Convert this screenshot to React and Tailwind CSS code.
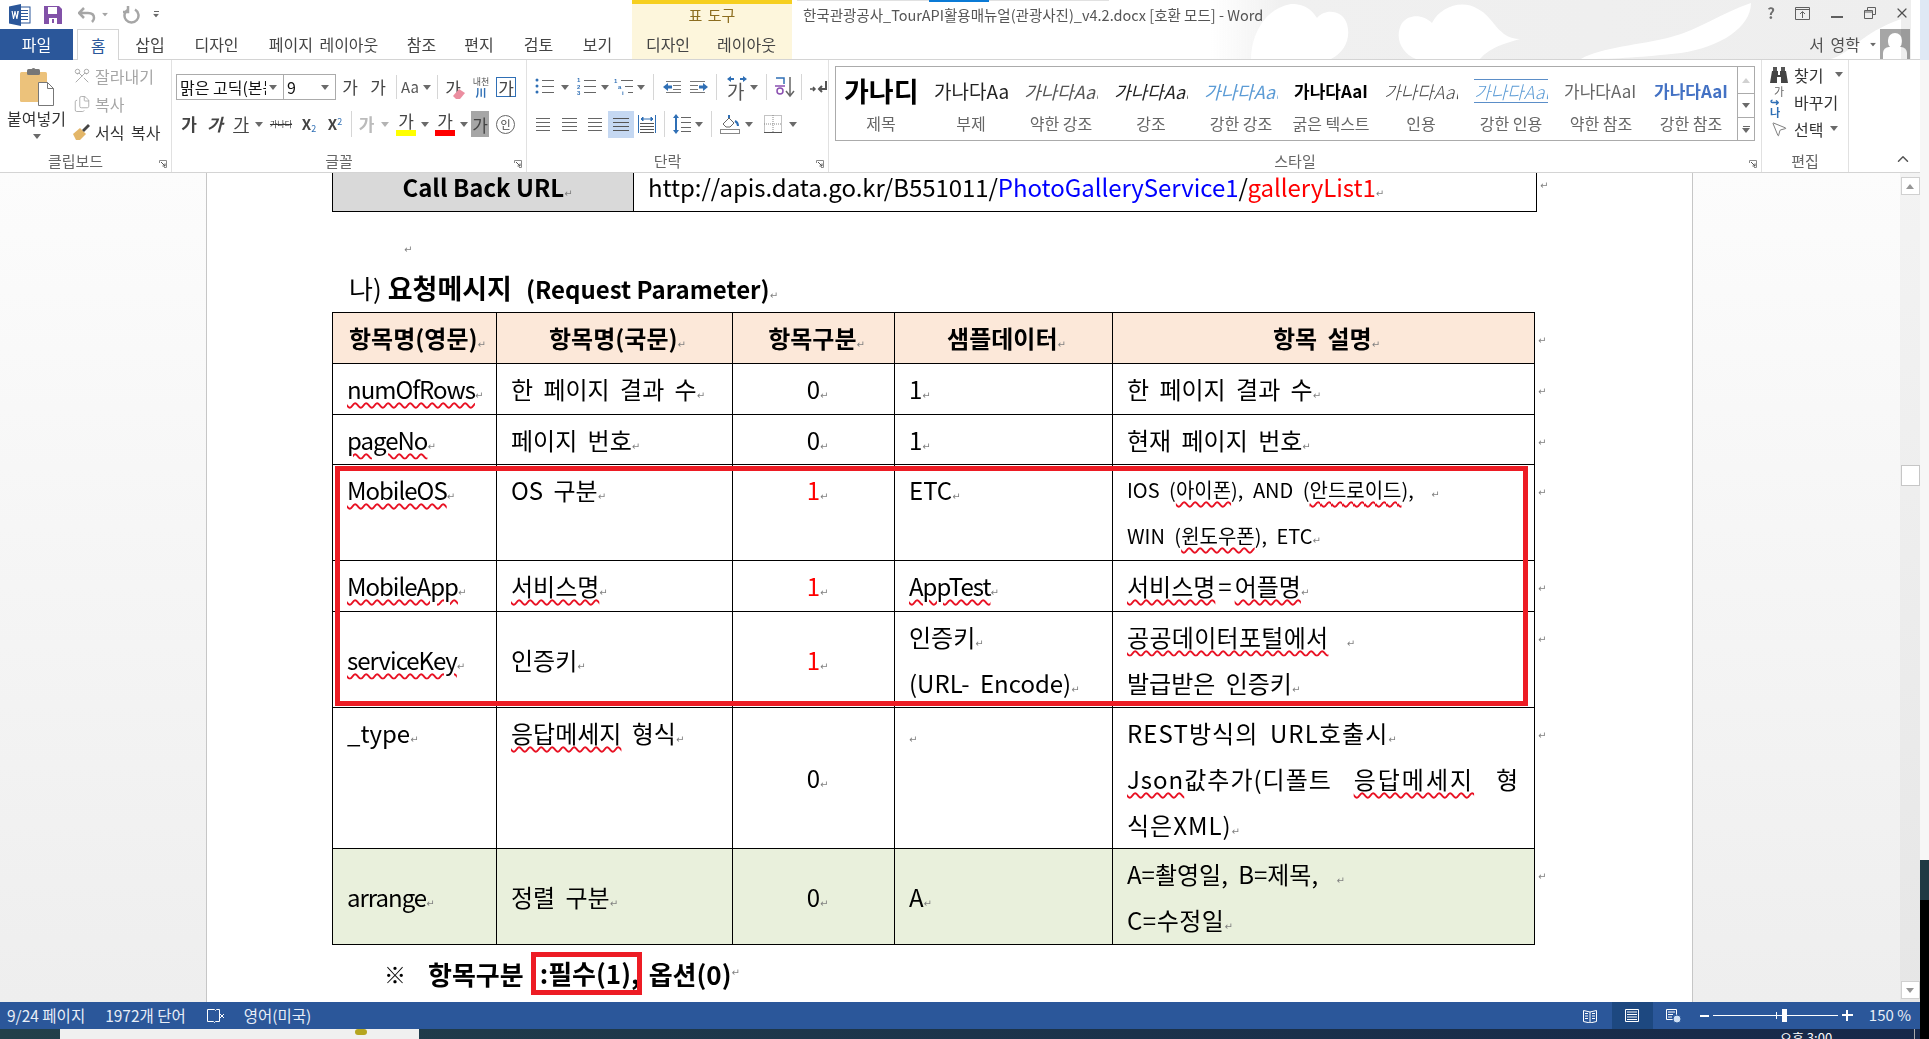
import { Scissors, Files, MousePointer2, ChevronUp, X } from "lucide-react";

const Caret = ({ className = "" }) => (
  <svg width="8" height="5" viewBox="0 0 8 5" className={`shrink-0 ${className}`}>
    <path d="M0 0h8L4 5z" fill="#6a6a6a" />
  </svg>
);

const Launcher = () => (
  <svg width="8" height="8" viewBox="0 0 8 8" className="absolute right-[4px] bottom-[4px]">
    <path d="M.5 3V.5H7.500V7.500H5" fill="none" stroke="#8a8a8a" />
    <path d="M2 2l4 4M6 3.500V6H3.500" fill="none" stroke="#555" />
  </svg>
);

const Sep = ({ className = "h-[26px]" }) => <div className={`w-px bg-[#d6d6d6] shrink-0 ${className}`} />;

const Mark = ({ className = "" }) => (
  <span className={`font-['DejaVu_Sans'] text-[10px] leading-none text-[#808080] font-normal tracking-normal no-underline ${className}`}>↵</span>
);

const Sp = ({ children, className = "" }) => (
  <span className={`underline decoration-wavy decoration-[#e81123] decoration-[1.5px] underline-offset-[3px] ${className}`}>{children}</span>
);

const Ga = ({ className = "" }) => <span className={`text-[17px] leading-none text-[#444] ${className}`}>가</span>;

function LinesIcon({ rows, x = 0, width = 18, color = "#666" }) {
  return (
    <svg width={width + x} height="18" viewBox={`0 0 ${width + x} 18`} className="shrink-0">
      {rows.map((y) => (
        <rect key={y} x={x} y={y} width={width} height="1" fill={color} />
      ))}
    </svg>
  );
}

function ListIcon({ kind }) {
  const blue = "#2f6fb5";
  return (
    <svg width="20" height="18" viewBox="0 0 20 18" className="shrink-0">
      {kind === "bullet" && [2, 8, 14].map((y) => <circle key={y} cx="2" cy={y} r="1.500" fill={blue} />)}
      {kind === "number" &&
        ["1", "2", "3"].map((n, i) => (
          <text key={n} x="0" y={4 + i * 6.500} fontSize="6" fill={blue} fontFamily="Liberation Sans" fontWeight="700">{n}</text>
        ))}
      {kind === "multi" && (
        <>
          <text x="0" y="5" fontSize="6" fill={blue} fontFamily="Liberation Sans" fontWeight="700">1</text>
          <text x="4" y="11" fontSize="6" fill={blue} fontFamily="Liberation Sans" fontWeight="700">a</text>
          <text x="8" y="17" fontSize="6" fill={blue} fontFamily="Liberation Sans" fontWeight="700">i</text>
        </>
      )}
      {kind === "multi" ? (
        <>
          <rect x="7" y="2" width="12" height="1" fill="#666" />
          <rect x="11" y="8" width="8" height="1" fill="#666" />
          <rect x="14" y="14" width="5" height="1" fill="#666" />
        </>
      ) : (
        [2, 8, 14].map((y) => <rect key={y} x="7" y={y} width="12" height="1" fill="#666" />)
      )}
    </svg>
  );
}

function IndentIcon({ flip }) {
  return (
    <svg width="18" height="14" viewBox="0 0 18 14" className={`shrink-0 ${flip ? "-scale-x-100" : ""}`}>
      <path d="M0 7l5-4v2.500h4v3H5V11z" fill="#2f6fb5" />
      {[1, 5, 9, 12].map((y) => (
        <rect key={y} x={y === 1 || y === 12 ? 3 : 10} y={y} width={y === 1 || y === 12 ? 15 : 8} height="1" fill="#777" />
      ))}
    </svg>
  );
}

function Paragraph() {
  return (
    <div className="flex flex-col pl-[8px] pt-[14px]">
      <div className="flex items-center h-[26px]">
        <ListIcon kind="bullet" />
        <Caret className="ml-[6px]" />
        <div className="w-[8px]" />
        <ListIcon kind="number" />
        <Caret className="ml-[4px]" />
        <div className="w-[5px]" />
        <ListIcon kind="multi" />
        <Caret className="ml-[3px]" />
        <div className="w-[8px]" />
        <Sep />
        <div className="w-[9px]" />
        <IndentIcon />
        <div className="w-[9px]" />
        <IndentIcon flip />
        <div className="w-[8px]" />
        <Sep />
        <svg width="20" height="24" viewBox="0 0 20 24" className="shrink-0 ml-[10px]">
          <path d="M0 4l4-3v2h3v2H4v2zM20 4l-4-3v2h-3v2h3v2z" fill="#2f6fb5" />
        </svg>
        <span className="text-[19px] leading-none text-[#555] -ml-[20px] mt-[6px] w-[20px]">가</span>
        <Caret className="ml-[3px]" />
        <div className="w-[8px]" />
        <Sep />
        <svg width="20" height="22" viewBox="0 0 20 22" className="shrink-0 ml-[8px]">
          <path d="M1 2h8v6" fill="none" stroke="#2f6fb5" strokeWidth="1.500" />
          <circle cx="5" cy="15" r="3" fill="none" stroke="#8a4fb0" strokeWidth="1.500" />
          <path d="M0 10h10" stroke="#8a4fb0" strokeWidth="1.500" />
          <path d="M15 1v18M11 15l4 5 4-5" fill="none" stroke="#666" strokeWidth="1.500" />
        </svg>
        <div className="w-[6px]" />
        <Sep />
        <svg width="18" height="16" viewBox="0 0 18 16" className="shrink-0 ml-[8px]">
          <path d="M9 10h7V2M16 2l0 8H9m3-3l-3 3 3 3" fill="none" stroke="#555" strokeWidth="2" />
          <path d="M0 10h5m-2-2l2 2-2 2" fill="none" stroke="#555" strokeWidth="1.500" />
        </svg>
      </div>
      <div className="flex items-center h-[28px] mt-[10px] -ml-[6px]">
        <div className="w-[27px] h-[27px] flex items-center justify-center"><LinesIcon rows={[3, 7, 11, 15]} width={14} /></div>
        <div className="w-[26px] h-[27px] flex items-center justify-center"><LinesIcon rows={[3, 7, 11, 15]} width={15} /></div>
        <div className="w-[26px] h-[27px] flex items-center justify-center"><LinesIcon rows={[3, 7, 11, 15]} width={14} /></div>
        <div className="w-[26px] h-[27px] flex items-center justify-center bg-[#c5d8f2]"><LinesIcon rows={[3, 7, 11, 15]} width={16} color="#555" /></div>
        <svg width="18" height="18" viewBox="0 0 18 18" className="shrink-0 ml-[4px]">
          <path d="M3 4h12M3 4l2-2v4zM15 4l-2-2v4z" fill="#2f6fb5" stroke="#2f6fb5" />
          <rect x="0" y="0" width="1" height="18" fill="#2f6fb5" />
          <rect x="17" y="0" width="1" height="18" fill="#2f6fb5" />
          {[8, 11, 14, 17].map((y) => <rect key={y} x="2" y={y} width="14" height="1" fill="#555" />)}
        </svg>
        <div className="w-[8px]" />
        <Sep />
        <svg width="18" height="20" viewBox="0 0 18 20" className="shrink-0 ml-[8px]">
          <path d="M3 0l3 4H4v12h2l-3 4-3-4h2V4H0z" fill="#2f6fb5" />
          {[3, 8, 13, 17].map((y) => <rect key={y} x="8" y={y} width="10" height="1" fill="#666" />)}
        </svg>
        <Caret className="ml-[4px]" />
        <div className="w-[8px]" />
        <Sep />
        <svg width="20" height="20" viewBox="0 0 20 20" className="shrink-0 ml-[8px]">
          <path d="M3 10l6-6 5 5-4 4H6z" fill="#fff" stroke="#666" />
          <path d="M9 4V1M15 7c2 1 3 3 3 5" fill="none" stroke="#2f6fb5" strokeWidth="2" />
          <rect x="0.500" y="15.500" width="19" height="4" fill="#fff" stroke="#888" />
        </svg>
        <Caret className="ml-[5px]" />
        <svg width="18" height="18" viewBox="0 0 18 18" className="shrink-0 ml-[11px]">
          <path d="M.5.500h17v17H.5z" fill="none" stroke="#888" strokeDasharray="1 1" />
          <path d="M9 0v18M0 9h18" stroke="#888" strokeDasharray="1 1" />
          <path d="M0 17.500h18" stroke="#555" />
        </svg>
        <Caret className="ml-[7px]" />
      </div>
    </div>
  );
}

function Clipboard() {
  return (
    <div className="flex h-full">
      <div className="w-[73px] flex flex-col items-center pt-[8px]">
        <svg width="34" height="38" viewBox="0 0 34 38" className="shrink-0">
          <rect x="0" y="4" width="27" height="30" rx="1.500" fill="#ecc27b" />
          <rect x="7" y="1" width="13" height="6" rx="1.500" fill="#777" />
          <circle cx="13.500" cy="2" r="2" fill="#777" />
          <path d="M18.500 14.500h9l6 6v17h-15z" fill="#fff" stroke="#777" />
          <path d="M27.500 14.500v6h6" fill="none" stroke="#777" />
        </svg>
        <span className="text-[16px] leading-[20px] text-[#333] mt-[2px] whitespace-nowrap">붙여넣기</span>
        <Caret className="mt-[6px]" />
      </div>
      <div className="flex flex-col pt-[2px]">
        <div className="flex items-center h-[28px] gap-[4px]">
          <Scissors size={18} strokeWidth={1.300} className="text-[#aaaaaa] -scale-x-100 -rotate-90" />
          <span className="text-[16px] text-[#a6a6a6]">잘라내기</span>
        </div>
        <div className="flex items-center h-[28px] gap-[4px]">
          <Files size={18} strokeWidth={1.200} className="text-[#aaaaaa]" />
          <span className="text-[16px] text-[#a6a6a6]">복사</span>
        </div>
        <div className="flex items-center h-[28px] gap-[4px]">
          <svg width="18" height="18" viewBox="0 0 18 18" className="shrink-0">
            <path d="M0 11l7-6 6 6-6 6H3z" fill="#e3b668" />
            <path d="M9 7l6-6 2 2-6 6z" fill="#444" />
          </svg>
          <span className="text-[16px] text-[#333] [word-spacing:3px]">서식 복사</span>
        </div>
      </div>
    </div>
  );
}

function FontGroup() {
  return (
    <div className="flex flex-col pl-[4px] pt-[14px]">
      <div className="flex items-center h-[26px]">
        <div className="w-[108px] h-[26px] border border-[#ababab] flex items-center pl-[3px] pr-[6px] gap-[3px] overflow-hidden">
          <span className="text-[16px] text-[#111] whitespace-nowrap w-[90px] overflow-hidden">맑은 고딕(본문</span>
          <Caret />
        </div>
        <div className="w-[52px] h-[26px] border border-l-0 border-[#ababab] flex items-center justify-between pl-[3px] pr-[6px]">
          <span className="text-[16px] text-[#111]">9</span>
          <Caret />
        </div>
        <div className="w-[28px] text-center"><Ga /></div>
        <div className="w-[28px] text-center"><Ga /></div>
        <Sep className="h-[24px] ml-[4px]" />
        <div className="w-[38px] flex items-center justify-center gap-[4px]">
          <span className="text-[15px] text-[#555]">Aa</span>
          <Caret />
        </div>
        <Sep className="h-[24px] ml-[2px]" />
        <div className="w-[30px] relative flex justify-center">
          <Ga />
          <svg width="12" height="10" viewBox="0 0 12 10" className="absolute right-[3px] -bottom-[3px]"><path d="M0 7l6-7 6 4-5 6H3z" fill="#eb8ea0" /></svg>
        </div>
        <div className="w-[26px] flex flex-col items-center leading-none">
          <span className="text-[9px] text-[#555] leading-[10px]">내천</span>
          <span className="text-[11px] text-[#2f6fb5] leading-[10px] font-bold">川</span>
        </div>
        <div className="w-[20px] h-[20px] border border-[#2f6fb5] flex items-center justify-center ml-[2px]"><Ga /></div>
      </div>
      <div className="flex items-center h-[28px] mt-[10px]">
        <div className="w-[26px] text-center"><Ga className="font-bold text-[14px]" /></div>
        <div className="w-[26px] text-center"><Ga className="font-bold italic text-[14px]" /></div>
        <div className="w-[26px] text-center"><Ga className="underline text-[14px]" /></div>
        <Caret className="ml-[1px]" />
        <div className="w-[30px] ml-[3px] text-center line-through text-[8px] text-[#333] whitespace-nowrap">가나다</div>
        <div className="w-[26px] text-center text-[15px] font-bold text-[#444]">X<sub className="text-[9px] text-[#2f6fb5] font-normal">2</sub></div>
        <div className="w-[26px] text-center text-[15px] font-bold text-[#444]">X<sup className="text-[9px] text-[#2f6fb5] font-normal">2</sup></div>
        <Sep className="h-[26px] ml-[3px]" />
        <div className="w-[27px] ml-[1px] text-center"><Ga className="text-[#bbbbbb] font-bold" /></div>
        <Caret className="ml-[1px] opacity-50" />
        <div className="w-[24px] ml-[5px] flex flex-col items-center">
          <Ga />
          <div className="w-[20px] h-[6px] bg-[#ffff00] mt-[1px]" />
        </div>
        <Caret className="ml-[3px]" />
        <div className="w-[24px] ml-[4px] flex flex-col items-center">
          <Ga />
          <div className="w-[20px] h-[6px] bg-[#ff0000] mt-[1px]" />
        </div>
        <Caret className="ml-[3px]" />
        <div className="w-[18px] h-[26px] ml-[3px] bg-[#a6a6a6] flex items-center justify-center"><Ga className="text-[15px]" /></div>
        <div className="w-[19px] h-[19px] ml-[7px] rounded-full border border-[#666] flex items-center justify-center text-[11px] leading-none text-[#444]">인</div>
      </div>
    </div>
  );
}

const styleItems = [
  ["제목", "가나디", "text-[27px] font-bold text-black"],
  ["부제", "가나다Aa", "text-[19px] text-[#222]"],
  ["약한 강조", "가나다Aal", "text-[18px] italic text-[#555]"],
  ["강조", "가나다Aal", "text-[18px] italic text-[#222]"],
  ["강한 강조", "가나다Aal", "text-[18px] italic text-[#5b9bd5]"],
  ["굵은 텍스트", "가나다AaI", "text-[17px] font-bold text-black"],
  ["인용", "가나다Aal", "text-[18px] italic font-light text-[#444]"],
  ["강한 인용", "가나다Aal", "text-[18px] italic font-light text-[#5b9bd5] border-y border-[#5b8ec8]"],
  ["약한 참조", "가나다AaI", "text-[17px] text-[#666]"],
  ["강한 참조", "가나다AaI", "text-[17px] font-bold text-[#4472c4]"],
];

function StylesGroup() {
  return (
    <div className="pl-[6px] pt-[6px]">
      <div className="w-[920px] h-[75px] border border-[#ababab] flex">
        <div className="flex flex-1">
          {styleItems.map(([label, sample, cls]) => (
            <div key={label} className="w-[90px] flex flex-col items-center shrink-0">
              <div className="h-[44px] flex items-center pt-[5px] pb-[1px] w-[74px] overflow-hidden">
                <span className={`whitespace-nowrap leading-[22px] ${cls}`}>{sample}</span>
              </div>
              <span className="text-[16px] leading-[20px] text-[#666] mt-[2px] whitespace-nowrap">{label}</span>
            </div>
          ))}
        </div>
        <div className="w-[17px] border-l border-[#ababab] flex flex-col text-[#888]">
          <div className="h-[27px] flex items-center justify-center border-b border-[#ababab]">
            <Caret className="rotate-180 opacity-30" />
          </div>
          <div className="h-[24px] flex items-center justify-center border-b border-[#ababab]"><Caret /></div>
          <div className="flex-1 flex flex-col items-center justify-center gap-[1px]">
            <div className="w-[7px] h-px bg-[#6a6a6a]" />
            <Caret />
          </div>
        </div>
      </div>
    </div>
  );
}

function EditGroup() {
  return (
    <div className="flex flex-col pl-[8px] pt-[1px]">
      <div className="flex items-center h-[27px] gap-[6px]">
        <svg width="18" height="18" viewBox="0 0 18 18" className="shrink-0">
          <path d="M3 1h4v4H3zM11 1h4v4h-4z" fill="#555" />
          <path d="M2 5h6v4h2V5h6l2 12h-7V11H7v6H0z" fill="#444" />
        </svg>
        <span className="text-[16px] text-[#333]">찾기</span>
        <Caret className="ml-[6px]" />
      </div>
      <div className="flex items-center h-[27px] gap-[6px]">
        <div className="w-[18px] flex flex-col items-center leading-none shrink-0">
          <span className="text-[11px] leading-[10px] text-[#666]">가</span>
          <span className="text-[11px] leading-[11px] text-[#2f6fb5] font-bold">↪나</span>
        </div>
        <span className="text-[16px] text-[#333]">바꾸기</span>
      </div>
      <div className="flex items-center h-[27px] gap-[6px]">
        <MousePointer2 size={18} strokeWidth={1} className="text-[#555] shrink-0" />
        <span className="text-[16px] text-[#333]">선택</span>
        <Caret className="ml-[1px]" />
      </div>
    </div>
  );
}

function RibbonGroup({ className, labelClass = "", label, launcher, children }) {
  return (
    <div className={`relative h-full flex flex-col shrink-0 ${className}`}>
      <div className="flex-1 min-h-0">{children}</div>
      <div className={`h-[24px] text-center text-[15px] leading-[26px] text-[#666] ${labelClass}`}>{label}</div>
      {launcher && <Launcher />}
    </div>
  );
}

function TitleBar() {
  return (
    <div className="relative h-[29px] flex items-start bg-white overflow-visible shrink-0">
      <div className="flex items-center h-[29px] pl-[9px] w-[632px] shrink-0">
        <svg width="22" height="22" viewBox="0 0 22 22" className="shrink-0">
          <rect x="8" y="3" width="13" height="16" fill="#fff" stroke="#2b579a" />
          {[6, 9, 12, 15].map((y) => <rect key={y} x="12" y={y} width="7" height="1" fill="#2b579a" />)}
          <path d="M0 2.500L12 0v22L0 19.500z" fill="#2b579a" />
          <path d="M2.500 7l1.500 8h1l1.200-5 1.200 5h1l1.500-8H8.300l-.7 5-1.100-5h-1l-1.100 5-.7-5z" fill="#fff" />
        </svg>
        <svg width="18" height="18" viewBox="0 0 18 18" className="shrink-0 ml-[13px]">
          <path d="M0 0h15l3 3v15H0z" fill="#8251a8" />
          <rect x="4" y="1" width="9" height="7" fill="#fff" />
          <rect x="5" y="12" width="8" height="6" fill="#fff" />
          <rect x="8" y="13" width="2" height="4" fill="#8251a8" />
        </svg>
        <svg width="18" height="16" viewBox="0 0 18 16" className="shrink-0 ml-[16px]">
          <path d="M6 1L1 6l5 5M1 6h9c4 0 6 2 6 5 0 2-1 3-2 4" fill="none" stroke="#a6a6a6" strokeWidth="2.500" />
        </svg>
        <Caret className="ml-[5px] scale-75 opacity-60" />
        <svg width="17" height="18" viewBox="0 0 17 18" className="shrink-0 ml-[14px]">
          <path d="M5 3.500A7 7 0 1 0 12 3.500M5 0v6H0" fill="none" stroke="#a6a6a6" strokeWidth="2.500" />
        </svg>
        <div className="ml-[12px] flex flex-col items-center gap-[1px]">
          <div className="w-[5px] h-px bg-[#666]" />
          <Caret className="scale-75" />
        </div>
      </div>
      <div className="w-[160px] h-[29px] shrink-0 bg-[#fdf6dc] border-t-[4px] border-[#f6cf1f] text-center text-[15px] leading-[22px] text-[#8c6d1f] [word-spacing:2px]">표 도구</div>
      <div className="pl-[11px] text-[14.500px] leading-[29px] text-[#555] whitespace-nowrap">
        한국관광공사_TourAPI활용매뉴얼(관광사진)_v4.2.docx [호환 모드] - Word
      </div>
      <div className="absolute top-0 left-[797px] w-[312px] h-px bg-[#e1e1e1]">
        <div className="ml-[132px] w-[60px] h-[2px] bg-[#0a7ad6]" />
      </div>
      <div className="absolute right-[10px] top-[3px] flex items-center text-[#666]">
        <span className="text-[15px] font-bold leading-[20px] text-[#777] w-[20px] text-center mr-[14px]">?</span>
        <svg width="15" height="13" viewBox="0 0 15 13" className="mr-[21px]"><path d="M.5.500h14v12H.5zM0 2.500h15M7.500 11V5M5 7l2.500-2.500L10 7" fill="none" stroke="#666" /></svg>
        <div className="w-[12px] h-[2px] bg-[#666] mr-[21px] mt-[7px]" />
        <svg width="12" height="12" viewBox="0 0 12 12" className="mr-[18px]"><path d="M3.500 3V.5h8v7H9M.5 3.500h8v8h-8zM.5 5h8" fill="none" stroke="#666" /></svg>
        <X size={16} strokeWidth={1.800} className="text-[#555]" />
      </div>
    </div>
  );
}

function TabBar() {
  const tabs = [
    ["삽입", "w-[60px]"],
    ["디자인", "w-[73px]"],
    ["페이지 레이아웃", "w-[141px]"],
    ["참조", "w-[55px]"],
    ["편지", "w-[60px]"],
    ["검토", "w-[59px]"],
    ["보기", "w-[59px]"],
  ];
  return (
    <div className="relative h-[31px] flex items-end border-b border-[#d4d4d4] shrink-0 text-[16px] text-[#444] bg-white">
      <div className="w-[73px] h-[31px] bg-[#2b579a] text-white text-center leading-[30px] -mb-px">파일</div>
      <div className="w-[42px] h-[31px] ml-[4px] bg-white border border-b-0 border-[#d4d4d4] text-[#2b579a] text-center leading-[30px] -mb-px z-10">홈</div>
      <div className="flex h-[30px] ml-[1px]">
        {tabs.map(([name, w]) => (
          <div key={name} className={`${w} text-center leading-[30px] whitespace-nowrap [word-spacing:3px]`}>{name}</div>
        ))}
      </div>
      <div className="absolute left-[632px] top-0 w-[160px] h-[30px] bg-[#fdf6dc] flex">
        <div className="w-[72px] text-center leading-[30px]">디자인</div>
        <div className="w-[85px] text-center leading-[30px]">레이아웃</div>
      </div>
      <div className="absolute right-[43px] top-0 h-[30px] flex items-center gap-[9px] text-[16px] text-[#555]">
        <span className="[word-spacing:3px]">서 영학</span>
        <Caret className="scale-75" />
      </div>
      <div className="absolute right-[10px] top-0 w-[30px] h-[30px] bg-[#a6a6a6] overflow-hidden flex flex-col items-center">
        <div className="w-[14px] h-[17px] rounded-full bg-white mt-[4px]" />
        <div className="w-[24px] h-[12px] rounded-t-[6px] bg-white -mt-[2px]" />
      </div>
    </div>
  );
}

function Ribbon() {
  return (
    <div className="relative h-[113px] flex bg-white border-b border-[#d4d4d4] shrink-0">
      <RibbonGroup className="w-[172px] border-r border-[#e1e1e1]" labelClass="pr-[20px]" label="클립보드" launcher><Clipboard /></RibbonGroup>
      <RibbonGroup className="w-[355px] border-r border-[#e1e1e1]" labelClass="pr-[20px]" label="글꼴" launcher><FontGroup /></RibbonGroup>
      <RibbonGroup className="w-[302px] border-r border-[#e1e1e1]" labelClass="pr-[20px]" label="단락" launcher><Paragraph /></RibbonGroup>
      <RibbonGroup className="w-[933px] border-r border-[#e1e1e1]" label="스타일" launcher><StylesGroup /></RibbonGroup>
      <RibbonGroup className="w-[87px] border-r border-[#e1e1e1]" label="편집"><EditGroup /></RibbonGroup>
      <ChevronUp size={18} strokeWidth={2} className="absolute right-[8px] bottom-[4px] text-[#555]" />
    </div>
  );
}

const Cell = ({ className = "px-[14px]", children }) => (
  <td className={`border border-black whitespace-nowrap ${className}`}>{children}</td>
);

const RowEnd = () => (
  <td className="border-0 bg-white pl-[3px] align-top pt-[2px] leading-[38px]"><Mark /></td>
);

const left = "px-[14px]";
const narrow = "px-[14px] tracking-[-1px]";
const top = "px-[14px] align-top pt-[2px]";
const center = "pl-[8px] text-center";
const head = "pl-[6px] text-center";

function ParamTable() {
  return (
    <div className="relative w-[1230px]">
      <table className="table-fixed border-collapse w-[1216px] text-[24px] leading-[46px] text-black [word-spacing:5px]">
        <colgroup>
          <col className="w-[164px]" />
          <col className="w-[236px]" />
          <col className="w-[162px]" />
          <col className="w-[218px]" />
          <col className="w-[422px]" />
          <col className="w-[14px]" />
        </colgroup>
        <tbody>
          <tr className="h-[51px] bg-[#fce8d9] font-bold">
            <Cell className={head}>항목명(영문)<Mark /></Cell>
            <Cell className={head}>항목명(국문)<Mark /></Cell>
            <Cell className={head}>항목구분<Mark /></Cell>
            <Cell className={head}>샘플데이터<Mark /></Cell>
            <Cell className={head}>항목 설명<Mark /></Cell>
            <RowEnd />
          </tr>
          <tr className="h-[51px]">
            <Cell className={narrow}><Sp>numOfRows</Sp><Mark /></Cell>
            <Cell>한 페이지 결과 수<Mark /></Cell>
            <Cell className={center}>0<Mark /></Cell>
            <Cell>1<Mark /></Cell>
            <Cell>한 페이지 결과 수<Mark /></Cell>
            <RowEnd />
          </tr>
          <tr className="h-[50px]">
            <Cell className={narrow}><Sp>pageNo</Sp><Mark /></Cell>
            <Cell>페이지 번호<Mark /></Cell>
            <Cell className={center}>0<Mark /></Cell>
            <Cell>1<Mark /></Cell>
            <Cell>현재 페이지 번호<Mark /></Cell>
            <RowEnd />
          </tr>
          <tr className="h-[96px]">
            <Cell className={`${top} tracking-[-1px]`}><Sp>MobileOS</Sp><Mark /></Cell>
            <Cell className={top}>OS 구분<Mark /></Cell>
            <Cell className={`${center} align-top pt-[2px] text-[#ff0000]`}>1<Mark /></Cell>
            <Cell className={top}>ETC<Mark /></Cell>
            <Cell className={`${top} text-[20px]`}>
              <div>IOS (<Sp>아이폰</Sp>), AND (<Sp>안드로이드</Sp>), <Mark className="ml-[8px]" /></div>
              <div>WIN (<Sp>윈도우폰</Sp>), ETC<Mark /></div>
            </Cell>
            <RowEnd />
          </tr>
          <tr className="h-[51px]">
            <Cell className={narrow}><Sp>MobileApp</Sp><Mark /></Cell>
            <Cell><Sp>서비스명</Sp><Mark /></Cell>
            <Cell className={`${center} text-[#ff0000]`}>1<Mark /></Cell>
            <Cell className={narrow}><Sp>AppTest</Sp><Mark /></Cell>
            <Cell><Sp>서비스명</Sp><span className="mx-[3px]">=</span><Sp>어플명</Sp><Mark /></Cell>
            <RowEnd />
          </tr>
          <tr className="h-[96px]">
            <Cell className={narrow}><Sp>serviceKey</Sp><Mark /></Cell>
            <Cell>인증키<Mark /></Cell>
            <Cell className={`${center} text-[#ff0000]`}>1<Mark /></Cell>
            <Cell>
              <div>인증키<Mark /></div>
              <div>(URL- Encode)<Mark /></div>
            </Cell>
            <Cell>
              <div><Sp className="tracking-[0.300px]">공공데이터포털에서</Sp> <Mark className="ml-[8px]" /></div>
              <div>발급받은 인증키<Mark /></div>
            </Cell>
            <RowEnd />
          </tr>
          <tr className="h-[141px]">
            <Cell className={top}>_type<Mark /></Cell>
            <Cell className={top}><Sp>응답메세지</Sp> 형식<Mark /></Cell>
            <Cell className={center}>0<Mark /></Cell>
            <Cell className={top}><Mark /></Cell>
            <Cell className={top}>
              <div className="tracking-[1.100px]">REST방식의 URL호출시<Mark /></div>
              <div className="flex justify-between w-[391px]">
                <span className="tracking-[1px]"><Sp>Json</Sp>값추가(디폴트</span>
                <Sp className="tracking-[2px]">응답메세지</Sp>
                <span>형</span>
              </div>
              <div className="tracking-[1px]">식은XML)<Mark /></div>
            </Cell>
            <RowEnd />
          </tr>
          <tr className="h-[96px] bg-[#e9f0dc]">
            <Cell className={narrow}>arrange<Mark /></Cell>
            <Cell className={left}>정렬 구분<Mark /></Cell>
            <Cell className={center}>0<Mark /></Cell>
            <Cell>A<Mark /></Cell>
            <Cell>
              <div>A=촬영일, B=제목, <Mark className="ml-[8px]" /></div>
              <div className="tracking-[0.500px]">C=수정일<Mark /></div>
            </Cell>
            <RowEnd />
          </tr>
        </tbody>
      </table>
      <div className="absolute left-[3px] top-[154px] w-[1193px] h-[240px] border-[5px] border-[#ed1c24] pointer-events-none" />
    </div>
  );
}

function DocPage() {
  return (
    <div className="w-[1487px] h-full shrink-0 bg-white border-x border-[#c6c6c6] pl-[125px] text-black overflow-hidden">
      <div className="flex items-start">
        <div className="w-[1205px] h-[39px] flex border-x border-b border-black text-[24px] leading-[28px]">
          <div className="w-[301px] bg-[#d9d9d9] border-r border-black text-center font-bold pl-[9px]">Call Back URL<Mark /></div>
          <div className="pl-[14px] whitespace-nowrap tracking-[-0.050px]">
            http://apis.data.go.kr/B551011/<span className="text-[#0000ff]">PhotoGalleryService1</span>/<span className="text-[#ff0000]">galleryList1</span><Mark />
          </div>
        </div>
        <Mark className="ml-[3px] mt-[8px]" />
      </div>
      <div className="h-[56px] pl-[72px] pt-[26px] leading-none"><Mark /></div>
      <div className="h-[44px] pl-[17px] text-[26px] leading-[40px] whitespace-nowrap">
        나)<span className="font-bold ml-[6px] text-[27px]">요청메시지</span><span className="font-bold text-[24px] ml-[14px]">(Request Parameter)</span><Mark />
      </div>
      <ParamTable />
      <div className="flex items-center h-[46px] mt-[5px] text-[26px] font-bold whitespace-nowrap">
        <span className="ml-[52px] w-[44px] text-[22px]">※</span>
        <span>항목구분</span>
        <div className="ml-[7px] h-[43px] w-[111px] border-[5px] border-[#ed1c24] flex items-center pl-[4px] leading-none overflow-hidden">:필수(1),</div>
        <span className="ml-[7px]">옵션(0)</span>
        <Mark />
      </div>
    </div>
  );
}

function Scrollbar() {
  return (
    <div className="w-[20px] h-full shrink-0 bg-gradient-to-b from-[#f3f3f3] to-[#e6e6e6] flex flex-col items-center pt-[4px] pb-[3px]">
      <div className="w-[19px] h-[18px] bg-white border border-[#d0d0d0] flex items-center justify-center"><Caret className="rotate-180 opacity-70" /></div>
      <div className="w-[19px] h-[21px] bg-white border border-[#c6c6c6] mt-[270px]" />
      <div className="flex-1" />
      <div className="w-[19px] h-[18px] bg-white border border-[#d0d0d0] flex items-center justify-center"><Caret className="opacity-70" /></div>
    </div>
  );
}

function StatusBar() {
  return (
    <div className="h-[27px] bg-[#2b579a] flex items-center text-[15.500px] text-[#e8eef7] shrink-0 relative whitespace-nowrap">
      <span className="ml-[7px]">9/24 페이지</span>
      <span className="ml-[20px]">1972개 단어</span>
      <svg width="18" height="16" viewBox="0 0 18 16" className="ml-[21px]">
        <path d="M.5 1.500h7l1 1 1-1h3v12h-4l-1 1-1-1h-6z" fill="none" stroke="#fff" />
        <path d="M13 6l4 4m0-4l-4 4" stroke="#fff" />
      </svg>
      <span className="ml-[19px]">영어(미국)</span>
      <div className="flex-1" />
      <svg width="14" height="14" viewBox="0 0 14 14" className="shrink-0"><path d="M.5 1.500L7 3l6.500-1.500v11L7 14 .5 12.500zM7 3v11M2 4.500h3M2 7h3M2 9.500h3M9 4.500h3M9 7h3M9 9.500h3" fill="none" stroke="#fff" /></svg>
      <div className="w-[41px] h-[27px] ml-[15px] bg-[#1d4880] flex items-center justify-center">
        <svg width="14" height="13" viewBox="0 0 14 13"><path d="M.5.500h13v12H.5zM2 3h10M2 5.500h10M2 8h10M2 10.500h10" fill="none" stroke="#fff" /></svg>
      </div>
      <svg width="15" height="14" viewBox="0 0 15 14" className="ml-[13px] shrink-0">
        <path d="M.5.500h10v10H.5zM2 3h7M2 5.500h5M2 8h4" fill="none" stroke="#fff" />
        <circle cx="11" cy="10" r="4" fill="#cfe0f5" stroke="#2b579a" />
      </svg>
      <div className="w-[9px] h-[2px] bg-white ml-[19px]" />
      <div className="relative w-[125px] h-px bg-white ml-[4px]">
        <div className="absolute left-[63px] -top-[3px] w-px h-[7px] bg-white" />
        <div className="absolute left-[69px] -top-[6px] w-[5px] h-[13px] bg-white" />
      </div>
      <div className="relative w-[11px] h-[11px] ml-[4px]">
        <div className="absolute left-0 top-[4px] w-[11px] h-[2px] bg-white" />
        <div className="absolute left-[4px] top-0 w-[2px] h-[11px] bg-white" />
      </div>
      <span className="ml-[16px] mr-[9px] text-[15px]">150 %</span>
    </div>
  );
}

function TitleArt() {
  return (
    <svg width="700" height="59" viewBox="0 0 700 59" className="absolute right-[9px] top-0">
      <defs>
        <linearGradient id="fade" x1="0" x2="1" y1="0" y2="0">
          <stop offset="0" stopColor="#f0f0f0" stopOpacity="0" />
          <stop offset="0.1" stopColor="#f0f0f0" />
          <stop offset="1" stopColor="#eeeeee" />
        </linearGradient>
      </defs>
      <rect width="700" height="59" fill="url(#fade)" />
      <path d="M40 59c0-22 12-50 40-55 16 0 22 8 26 14 8-10 26-8 30 6 4 14-2 28-16 35z" fill="#fff" />
      <path d="M205 59c-15-6-22-22-14-36 8-10 22-8 30 0 8-16 30-24 46-14 16 8 20 30 42 30-14 4-30 8-40 20z" fill="#fff" />
      <path d="M370 59c20-12 60-14 90-22 30-8 50-24 80-34 0 24-30 44-70 50-40 4-60 6-100 6z" fill="#fff" />
      <path d="M620 59c20-6 30-26 70-40v40z" fill="#fff" />
    </svg>
  );
}

export default function App() {
  return (
    <div className="relative w-[1929px] h-[1039px] overflow-hidden flex bg-black font-['Noto_Sans_CJK_KR',sans-serif]">
      <div className="w-[1920px] h-full flex flex-col shrink-0">
        <div className="relative shrink-0">
          <TitleBar />
          <TabBar />
          <div className="absolute inset-0 pointer-events-none mix-blend-multiply overflow-hidden"><TitleArt /></div>
        </div>
        <Ribbon />
        <div className="flex-1 min-h-0 flex bg-gradient-to-b from-[#fcfcfc] to-[#eeeeee]">
          <div className="w-[206px] shrink-0" />
          <DocPage />
          <div className="w-[207px] shrink-0" />
          <Scrollbar />
        </div>
        <StatusBar />
        <div className="h-[10px] shrink-0 bg-gradient-to-r from-[#22404a] to-[#17284a] relative overflow-hidden">
          <div className="absolute left-[60px] top-0 w-[359px] h-full bg-[#f0f0f0]">
            <div className="absolute left-[295px] top-0 w-[12px] h-[6px] rounded-full bg-[#b5a520]" />
          </div>
          <div className="absolute left-[1780px] top-[1px] text-[13px] leading-[16px] text-white whitespace-nowrap">오후 3:00</div>
          <div className="absolute left-[1914px] top-0 w-px h-full bg-[#aaaaaa]" />
        </div>
      </div>
      <div className="w-[9px] h-full shrink-0 flex flex-col">
        <div className="h-[60px] bg-[#dfe8f5]" />
        <div className="h-[800px] bg-[#f6f6f6]" />
        <div className="h-[40px] bg-[#1f3a44]" />
        <div className="flex-1 bg-black" />
      </div>
    </div>
  );
}
